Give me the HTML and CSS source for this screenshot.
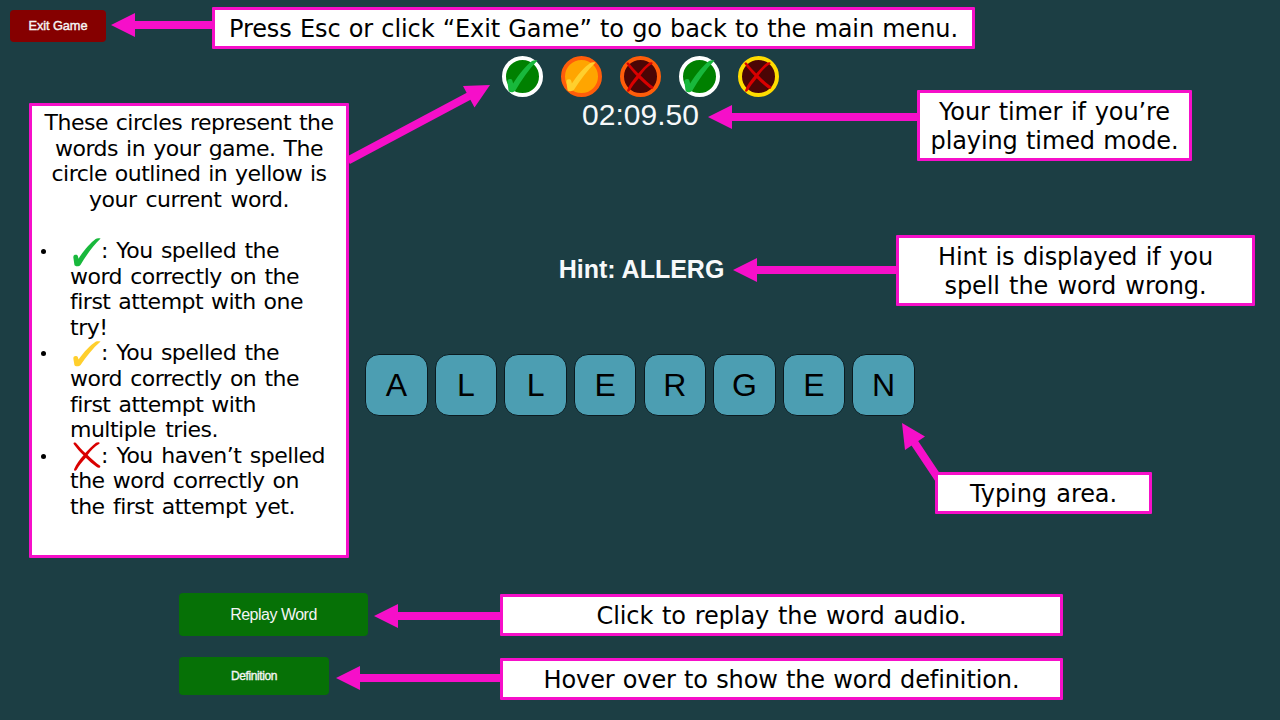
FILE: index.html
```html
<!DOCTYPE html>
<html lang="en">
<head>
<meta charset="utf-8">
<title>Spelling Game Help</title>
<link rel="stylesheet" href="styles.css">
</head>
<body>
<svg class="defs" aria-hidden="true">
  <symbol id="check" viewBox="0 0 28 29" preserveAspectRatio="none"><path d="M0.4 20C0.1 17.7 1 16.6 3 16.7 4.8 16.8 5 18.2 5.5 20.7 11 12 17.5 4.7 22.6.9 24 .1 25.8.2 27.6.5 19.8 8 13.2 17.5 7.6 26.7 6.5 28.5 2 29 1.4 26.8Z" fill="currentColor"/></symbol>
  <symbol id="cross" viewBox="0 0 28 30" preserveAspectRatio="none"><path d="M.8 2.2C-.2.7 1.6.2 3 1 5.8 4.4 9.2 8.500 12.300 11.500 15.800 7.600 19.500 3.400 23 .8 24.500-.1 27.500.1 26.400 1.700 21.700 4.300 17.800 8.800 14.600 13.500 18.600 17.500 23 21.800 27.100 24.500 28.200 26.800 25.300 27.400 23.400 25.700 19.600 22.700 16 19.500 12.800 16.200 9.200 20.600 5.800 24.400 3.700 28.800 2.700 30.200.6 30.100 1.200 28 3.100 23 6.700 18.100 10.500 13.700 7 10 3.500 6.200.8 2.200Z" fill="currentColor"/></symbol>
</svg>
<main class="game">
  <header class="top"><button class="exit">Exit Game</button></header>
  <div class="progress">
    <span class="dot good"><svg class="mark"><use href="#check"/></svg></span>
    <span class="dot retry"><svg class="mark"><use href="#check"/></svg></span>
    <span class="dot bad"><svg class="mark"><use href="#cross"/></svg></span>
    <span class="dot good"><svg class="mark"><use href="#check"/></svg></span>
    <span class="dot bad current"><svg class="mark"><use href="#cross"/></svg></span>
  </div>
  <div class="timer">02:09.50</div>
  <div class="hint">Hint: ALLERG</div>
  <div class="tiles"><span class="tile">A</span><span class="tile">L</span><span class="tile">L</span><span class="tile">E</span><span class="tile">R</span><span class="tile">G</span><span class="tile">E</span><span class="tile">N</span></div>
  <div class="actions">
    <button class="action replay">Replay Word</button>
    <button class="action definition">Definition</button>
  </div>
</main>

<svg class="arrows" viewBox="0 0 1280 720" aria-hidden="true">
  <g stroke="#f60fc9" stroke-width="8">
    <path d="M134 25H214M731 117H919M756 270H898M397 616H502M359 678H502M348 160.5L471 95M914 442L940 481"/>
  </g>
  <g fill="#f60fc9">
    <path d="M111 25L135 13V37ZM708 117L732 105V129ZM733 270L757 258V282ZM374 616L398 604V628ZM336 678L360 666V690ZM490 85L463 86L474.500 107.500ZM902 423L925 436.500L905 450Z"/>
  </g>
</svg>

<section class="callout c-exit"><p class="line w1">Press Esc or click “Exit Game” to go back to the main menu.</p></section>
<section class="callout c-timer"><p class="line w2">Your timer if you’re</p><p class="line w3">playing timed mode.</p></section>
<section class="callout c-hint"><p class="line w4">Hint is displayed if you</p><p class="line w5">spell the word wrong.</p></section>
<section class="callout c-type"><p class="line w6">Typing area.</p></section>
<section class="callout c-replay"><p class="line w7">Click to replay the word audio.</p></section>
<section class="callout c-def"><p class="line w8">Hover over to show the word definition.</p></section>
<section class="callout c-words">
  <div class="intro">
    <p class="line a1">These circles represent the</p>
    <p class="line a2">words in your game. The</p>
    <p class="line a3">circle outlined in yellow is</p>
    <p class="line a4">your current word.</p>
  </div>
  <ul class="legend">
    <li><svg class="key green"><use href="#check"/></svg>
      <p class="line first b1">: You spelled the</p><p class="line b2">word correctly on the</p><p class="line b3">first attempt with one</p><p class="line">try!</p></li>
    <li><svg class="key gold"><use href="#check"/></svg>
      <p class="line first b1">: You spelled the</p><p class="line b2">word correctly on the</p><p class="line b4">first attempt with</p><p class="line b5">multiple tries.</p></li>
    <li><svg class="key red"><use href="#cross"/></svg>
      <p class="line first b6">: You haven’t spelled</p><p class="line b7">the word correctly on</p><p class="line b8">the first attempt yet.</p></li>
  </ul>
</section>
</body>
</html>
```
FILE: styles.css
```css
* { box-sizing: border-box; }
body { margin: 0; width: 1280px; height: 720px; overflow: hidden; position: relative; background: #1c3e44; font-family: "Liberation Sans", Arial, sans-serif; }
p, ul { margin: 0; padding: 0; }
.defs { position: absolute; width: 0; height: 0; }
.game { display: flex; flex-direction: column; align-items: center; height: 720px; }
.top { align-self: stretch; height: 56px; padding: 10px 10px 0; }
button { border: 0; color: #f5f5f5; font-family: inherit; padding: 0; }
.exit { display: block; width: 96px; height: 32px; padding-bottom: 1px; border-radius: 4px; background: #850000; font-size: 12.8px; letter-spacing: -.1px; -webkit-text-stroke: .4px #f5f5f5; }
.progress { display: flex; gap: 18px; height: 41px; }
.dot { width: 41px; height: 41px; border-radius: 50%; border: 4px solid #fff; display: grid; place-items: center; }
.mark { width: 31px; height: 33px; }
.good { background: #008000; color: #18b83c; }
.retry { background: #ffa500; border-color: #ff5d0a; color: #ffcf2d; }
.retry .mark { width: 30px; height: 30px; }
.bad { background: #4b0505; border-color: #ff5d0a; color: #d90000; }
.bad .mark { width: 28px; height: 30px; }
.current { border-color: #ffdc00; }
.timer { margin-top: 1px; height: 34px; line-height: 34px; font-size: 30px; color: #f7f9fa; padding-left: 1px; }
.hint { margin-top: 122px; height: 30px; line-height: 30px; padding-left: 3px; font-size: 25px; font-weight: bold; color: #f7f9fa; }
.tiles { display: flex; gap: 7.1px; margin-top: 70px; }
.tile { width: 62.5px; height: 62px; border: 1px solid #0b1b20; border-radius: 14px; background: #4c9eb2; color: #000; font-size: 32px; line-height: 60px; text-align: center; }
.actions { align-self: flex-start; margin: 177px 0 0 179px; display: flex; flex-direction: column; gap: 21px; }
.action { border-radius: 4px; background: #067106; }
.replay { width: 189px; height: 43px; font-size: 16px; letter-spacing: -.5px; }
.definition { width: 150px; height: 38px; font-size: 12px; letter-spacing: -.4px; padding-bottom: 1px; -webkit-text-stroke: .35px #f5f5f5; }
.arrows { position: absolute; inset: 0; width: 1280px; height: 720px; }

.callout { position: absolute; background: #fff; border: 3px solid #f60fc9; border-radius: 1px; color: #000; font: 24px/29px "DejaVu Sans", Verdana, sans-serif; letter-spacing: -.1px; padding-top: 2px; display: flex; flex-direction: column; align-items: center; justify-content: center; }
.line { white-space: nowrap; text-align: justify; text-align-last: justify; }
.c-exit { left: 212px; top: 7px; width: 763px; height: 42px; }
.c-timer { left: 917px; top: 90px; width: 275px; height: 71px; }
.c-hint { left: 896px; top: 235px; width: 359px; height: 71px; }
.c-type { left: 935px; top: 472px; width: 217px; height: 42px; }
.c-replay { left: 500px; top: 594px; width: 563px; height: 42px; }
.c-def { left: 500px; top: 658px; width: 563px; height: 42px; }
.c-words { left: 29px; top: 103px; width: 320px; height: 455px; font-size: 22px; line-height: 25.6px; letter-spacing: -.5px; align-items: stretch; justify-content: flex-start; padding-top: 4px; }
.w1 { width: 729px; } .w2 { width: 231px; } .w3 { width: 248px; } .w4 { width: 275px; }
.w5 { width: 262px; } .w6 { width: 147px; } .w7 { width: 370px; } .w8 { width: 476px; }
.intro { display: flex; flex-direction: column; align-items: center; margin-bottom: 25.6px; }
.a1 { width: 289px; } .a2 { width: 268px; } .a3 { width: 275px; } .a4 { width: 200px; }
.legend { list-style: none; }
.legend li { position: relative; padding-left: 38px; }
.legend li::before { content: ""; position: absolute; left: 9px; top: 11px; width: 5px; height: 5px; border-radius: 50%; background: #000; }
.first { margin-left: 31px; }
.key { position: absolute; left: 41px; top: 0; width: 28px; height: 29px; }
.green { color: #18b83c; }
.gold { color: #ffcf2d; height: 26px; top: 1px; }
.red { color: #d90000; top: -1px; }
.b1 { width: 178px; } .b2 { width: 229px; } .b3 { width: 233px; } .b4 { width: 186px; }
.b5 { width: 148px; } .b6 { width: 224px; } .b7 { width: 229px; } .b8 { width: 225px; }
.legend .line:not([class*=" "]) { text-align-last: left; }
```
